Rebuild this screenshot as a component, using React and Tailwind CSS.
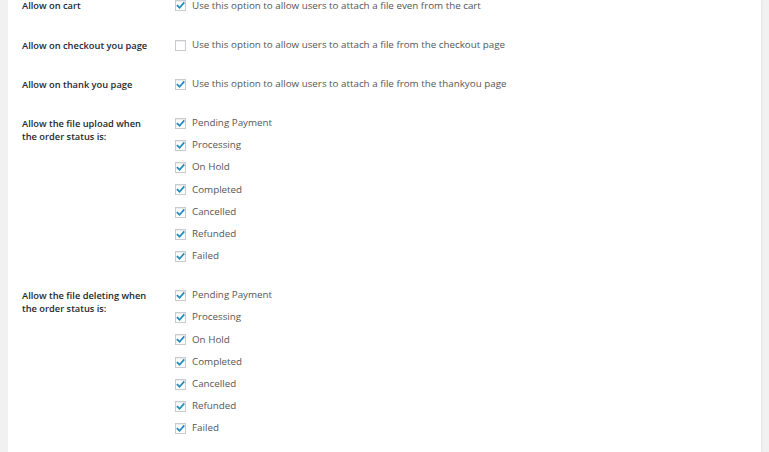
import React from "react";

const statuses = ["Pending Payment", "Processing", "On Hold", "Completed", "Cancelled", "Refunded", "Failed"];

function Box({ checked }) {
  return (
    <span className="w-[11px] h-[11px] border border-[#c8ccd0] bg-white shadow-[inset_0_1px_1px_rgba(0,0,0,0.08)] flex items-center justify-center shrink-0">
      {checked && (
        <svg width="9" height="9" viewBox="0 0 10 10">
          <path d="M1.6 5.2 L4 7.6 L8.6 2.2" fill="none" stroke="#1e8cbe" strokeWidth="1.9" strokeLinecap="square" />
        </svg>
      )}
    </span>
  );
}

function Option({ checked = true, children }) {
  return (
    <div className="h-[22.17px] flex items-center gap-[6px] text-[9.8px] text-[#555]">
      <Box checked={checked} />
      <span>{children}</span>
    </div>
  );
}

function Row({ label, children }) {
  return (
    <div className="flex py-[8.5px]">
      <div className="w-[153px] shrink-0 pt-[4.5px] pr-4 text-[9.3px] leading-[13px] font-semibold text-[#23282d]">
        {label}
      </div>
      <div className="flex flex-col">{children}</div>
    </div>
  );
}

export default function App() {
  return (
    <div className="w-[769px] h-[452px] overflow-hidden bg-[#f1f1f1] px-[8px]" style={{ fontFamily: '"Open Sans", "Liberation Sans", sans-serif' }}>
      <div className="h-full flex flex-col bg-white pl-[14px] shadow-[1px_0_2px_rgba(0,0,0,0.06)]">
        <div className="-mt-[13.6px]">
          <Row label="Allow on cart">
            <Option>Use this option to allow users to attach a file even from the cart</Option>
          </Row>
          <Row label="Allow on checkout you page">
            <Option checked={false}>Use this option to allow users to attach a file from the checkout page</Option>
          </Row>
          <Row label="Allow on thank you page">
            <Option>Use this option to allow users to attach a file from the thankyou page</Option>
          </Row>
          <Row label={<>Allow the file upload when<br />the order status is:</>}>
            {statuses.map((s) => (
              <Option key={s}>{s}</Option>
            ))}
          </Row>
          <Row label={<>Allow the file deleting when<br />the order status is:</>}>
            {statuses.map((s) => (
              <Option key={s}>{s}</Option>
            ))}
          </Row>
        </div>
      </div>
    </div>
  );
}
